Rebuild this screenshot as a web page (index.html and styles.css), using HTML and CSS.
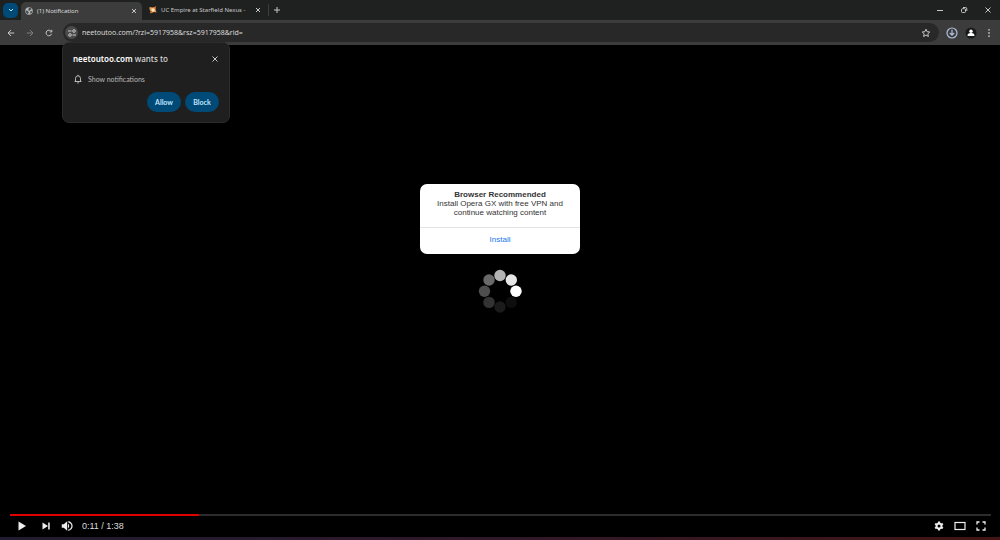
FILE: index.html
```html
<!DOCTYPE html>
<html lang="en">
<head>
<meta charset="utf-8">
<meta name="viewport" content="width=device-width, initial-scale=1">
<title>(1) Notification</title>
<link rel="stylesheet" href="styles.css">
</head>
<body>
<div class="browser">
  <header class="tabstrip">
    <button class="tab-search" aria-label="Search tabs"><svg viewBox="0 0 8 8" width="8" height="8"><path class="line" d="M2 3l2 2 2-2"/></svg></button>
    <div class="tab tab-active">
      <svg class="favicon" viewBox="0 0 16 16"><circle cx="8" cy="8" r="7.5" fill="#b3b5b7"/><path fill="#46494b" d="M1.500 7l4 1 2 3-2 3q-4-2-4-7zM8 1.500l3 0 2.500 3-3 1-1 2-3-1zM10.500 9l4-1-1 4-3 1.500z"/></svg>
      <span class="tab-title">(1) Notification</span>
      <button class="tab-close" aria-label="Close tab"><svg viewBox="0 0 8 8" width="8" height="8"><path class="line" d="M2 2l4 4M6 2l-4 4"/></svg></button>
    </div>
    <div class="tab tab-idle">
      <svg class="favicon" viewBox="0 0 16 16"><path fill="#e59a48" d="M1 2l6 1 7-2-1 6 2 6-5-1-7 3 0-5-2-3z"/><path fill="#f7e3c2" d="M5 5l5 0 2 4-4 3-3-3z"/><path fill="#b6572a" d="M1 14l4-4 1 3zM11 2l4-1-3 5z"/></svg>
      <span class="tab-title">UC Empire at Starfield Nexus -</span>
      <button class="tab-close" aria-label="Close tab"><svg viewBox="0 0 8 8" width="8" height="8"><path class="line" d="M2 2l4 4M6 2l-4 4"/></svg></button>
    </div>
    <button class="new-tab" aria-label="New tab"><svg viewBox="0 0 8 8" width="8" height="8"><path class="line" d="M4 1v6M1 4h6"/></svg></button>
    <div class="window-buttons">
      <button aria-label="Minimize"><svg viewBox="0 0 8 8" width="8" height="8"><path class="line" d="M1 4.5h6"/></svg></button>
      <button aria-label="Restore"><svg viewBox="0 0 8 8" width="8" height="8"><rect class="line" x="1.5" y="2.7" width="4" height="3.8" rx="1"/><path class="line" d="M3 1.5h2.5q1.3 0 1.3 1.3V5"/></svg></button>
      <button aria-label="Close window"><svg viewBox="0 0 8 8" width="8" height="8"><path class="line" d="M1.5 1.5l5 5M6.500 1.500l-5 5"/></svg></button>
    </div>
  </header>

  <div class="toolbar">
    <nav class="nav-buttons" aria-label="Navigation">
      <button aria-label="Back"><svg viewBox="0 0 8 8" width="8" height="8"><path class="line" d="M7.2 4H1M4 1L1 4l3 3"/></svg></button>
      <button class="dim" aria-label="Forward"><svg viewBox="0 0 8 8" width="8" height="8"><path class="line" d="M.8 4H7M4 1l3 3-3 3"/></svg></button>
      <button aria-label="Reload"><svg viewBox="0 0 8 8" width="8" height="8"><path class="line" d="M6.6 4.8A2.8 2.8 0 1 1 6.3 2.5M6.8 .8v2.1H4.7"/></svg></button>
    </nav>
    <div class="omnibox">
      <button class="site-info" aria-label="Site information"><svg viewBox="0 0 10 10" width="10" height="10"><path class="line" d="M1 3h3.500M5.500 7H9"/><circle class="line" cx="7" cy="3" r="1.3"/><circle class="line" cx="3" cy="7" r="1.3"/></svg></button>
      <input class="url" type="text" aria-label="Address" value="neetoutoo.com/?rzi=5917958&amp;rsz=5917958&amp;rid=">
      <button class="star" aria-label="Bookmark"><svg viewBox="0 0 10 10" width="10" height="10"><path class="line" d="M5 1.2l1.1 2.5 2.7.3-2 1.8.6 2.7L5 7.100l-2.400 1.400.6-2.700-2-1.800 2.700-.3z"/></svg></button>
    </div>
    <div class="toolbar-end">
      <button aria-label="Downloads"><svg viewBox="0 0 12 12" width="12" height="12"><g fill="none" stroke="#aebfdd" stroke-width="1.200"><circle cx="6" cy="6" r="5"/><path d="M6 2.800v5.400M3.800 6L6 8.200 8.200 6"/></g></svg></button>
      <button aria-label="Profile"><svg viewBox="0 0 12 12" width="12" height="12"><circle cx="6" cy="6" r="5.500" fill="#17191a"/><circle cx="6" cy="4.200" r="1.700" fill="#fff"/><path fill="#fff" d="M2.600 9V7.800Q2.800 6.400 6 5.700 9.200 6.400 9.400 7.800V9z"/></svg></button>
      <button aria-label="Menu"><svg viewBox="0 0 12 12" width="12" height="12"><g fill="#bdbdbd"><circle cx="5" cy="2.800" r=".9"/><circle cx="5" cy="6" r=".9"/><circle cx="5" cy="9.200" r=".9"/></g></svg></button>
    </div>

    <section class="permission" role="dialog" aria-label="Permission request">
      <div class="permission-head">
        <h2><b>neetoutoo.com</b> wants to</h2>
        <button aria-label="Dismiss"><svg viewBox="0 0 8 8" width="8" height="8"><path class="line" d="M1.500 1.500l5 5M6.500 1.500l-5 5"/></svg></button>
      </div>
      <p class="permission-item"><svg viewBox="0 0 10 10" width="10" height="10"><path class="line" d="M1.500 7.500h7M2.500 7.500V4.300Q2.600 1.900 5 1.800 7.400 1.900 7.500 4.300V7.500M5 .8v1M4.200 8.900h1.600"/></svg>Show notifications</p>
      <div class="permission-actions">
        <button>Allow</button>
        <button>Block</button>
      </div>
    </section>
  </div>

  <main class="player">
    <div class="stage">
      <section class="card">
        <div class="card-text">
          <h1>Browser Recommended</h1>
          <p>Install Opera GX with free VPN and continue watching content</p>
        </div>
        <a class="install" href="#">Install</a>
      </section>
      <svg class="spinner" viewBox="0 0 44 44" width="44" height="44" role="img" aria-label="Loading">
        <circle cx="22" cy="6.500" r="5.700" fill="#b3b3b3"/><circle cx="33.300" cy="11" r="5.700" fill="#e6e6e6"/><circle cx="38" cy="22.300" r="5.700" fill="#fff"/><circle cx="33.300" cy="33.400" r="5.700" fill="#0e0e0e"/><circle cx="22" cy="38" r="5.700" fill="#1b1b1b"/><circle cx="11" cy="33.400" r="5.700" fill="#333"/><circle cx="6.500" cy="22.300" r="5.700" fill="#4e4e4e"/><circle cx="11" cy="11" r="5.700" fill="#696969"/>
      </svg>
    </div>
    <footer class="controls">
      <progress class="track" value="11" max="57" aria-label="Playback position"></progress>
      <div class="control-row">
        <button aria-label="Play"><svg viewBox="0 0 12 12" width="12" height="12"><path fill="#eee" d="M2.500 1.500l7.500 4.500-7.500 4.500z"/></svg></button>
        <button class="next" aria-label="Next"><svg viewBox="0 0 12 12" width="12" height="12"><path fill="#eee" d="M2.500 2.500L8 6 2.500 9.500zM8.200 2.500h1.500v7H8.200z"/></svg></button>
        <button class="volume" aria-label="Mute"><svg viewBox="0 0 12 12" width="12" height="12"><path fill="#eee" d="M.8 4.200h2L6.200 1.200v9.600L2.800 7.800h-2zM7 3.500q2.400 2.500 0 5z"/><path fill="none" stroke="#eee" stroke-width="1.200" d="M7.300 1.600q3.700 1.300 3.700 4.400T7.300 10.400"/></svg></button>
        <span class="time">0:11 / 1:38</span>
        <div class="control-end">
          <button aria-label="Settings"><svg viewBox="0 0 12 12" width="12" height="12"><circle cx="6" cy="6" r="2.500" fill="none" stroke="#eee" stroke-width="2"/><path stroke="#eee" stroke-width="2" d="M6 1.500v1.500M6 9v1.500M2.100 3.750l1.300.75M8.600 7.500l1.300.75M2.100 8.250l1.300-.75M8.600 4.500l1.300-.75"/></svg></button>
          <button aria-label="Theater mode"><svg viewBox="0 0 12 12" width="12" height="12"><rect x="1" y="2.500" width="10" height="7" fill="none" stroke="#eee" stroke-width="1.200"/></svg></button>
          <button aria-label="Full screen"><svg viewBox="0 0 12 12" width="12" height="12"><path fill="none" stroke="#eee" stroke-width="1.300" d="M2 4.500V2h2.500M7.500 2H10v2.500M10 7.500V10H7.500M4.500 10H2V7.500"/></svg></button>
        </div>
      </div>
    </footer>
  </main>
  <div class="desktop-edge"></div>
</div>
</body>
</html>
```

FILE: styles.css
```css
* { box-sizing: border-box; }

body {
  margin: 0;
  background: #000;
  color: #dadada;
  font-family: Lato, "Open Sans", sans-serif;
  font-size: 7px;
  line-height: 10px;
}

button {
  display: flex;
  align-items: center;
  justify-content: center;
  padding: 0;
  border: 0;
  background: none;
  color: #c7c7c7;
  font: inherit;
}

h1, h2, p { margin: 0; }
svg { display: block; flex: none; }
.line { fill: none; stroke: currentColor; stroke-width: 1; }

.browser { display: flex; flex-direction: column; min-height: 100vh; }

.tabstrip {
  display: flex;
  align-items: center;
  height: 20px;
  padding-left: 3px;
  background: #1f2121;
}
.tab-search {
  width: 15px;
  height: 15px;
  margin-right: 3px;
  border-radius: 5px;
  background: #004a77;
  color: #c2e7ff;
}
.tab { display: flex; align-items: center; gap: 4px; height: 16px; padding: 0 4px; }
.tab-active {
  width: 121px;
  height: 18px;
  align-self: flex-end;
  padding-bottom: 1px;
  border-radius: 5px 5px 0 0;
  background: #3c3c3c;
}
.tab-idle {
  width: 126px;
  padding: 0 6px 0 7px;
  color: #c7c7c7;
}
.favicon { width: 8px; height: 8px; }
.tab-title {
  flex: 1;
  min-width: 0;
  font: 6px/10px "Noto Sans", "Open Sans", sans-serif;
  white-space: nowrap;
}
.tab-close { width: 8px; height: 8px; }
.new-tab {
  width: 16px;
  height: 12px;
  border-left: 1px solid #3c3e3e;
}
.window-buttons { display: flex; gap: 16px; margin-left: auto; padding-right: 8px; }

.toolbar {
  position: relative;
  display: flex;
  align-items: center;
  height: 25px;
  padding: 0 4px 0 7px;
  background: #3c3c3c;
}
.nav-buttons { display: flex; gap: 11px; width: 56px; }
.nav-buttons .dim { color: #7e7e7e; }
.omnibox {
  display: flex;
  flex: 1;
  align-items: center;
  gap: 4px;
  height: 19px;
  padding: 0 8px 0 2px;
  border-radius: 10px;
  background: #282828;
}
.site-info { width: 13px; height: 13px; border-radius: 50%; background: #4a4a4a; }
.url {
  flex: 1;
  min-width: 0;
  padding: 0;
  border: 0;
  outline: 0;
  background: none;
  color: #dadada;
  font: 7px/10px "Noto Sans", "Open Sans", sans-serif;
}
.toolbar-end { display: flex; gap: 7px; margin-left: 7px; }

.permission {
  position: absolute;
  z-index: 1;
  top: 22px;
  left: 62px;
  width: 168px;
  padding: 11px 10px 10px;
  border: 1px solid #2b2c2c;
  border-radius: 7px;
  background: #1f1f1f;
}
.permission-head { display: flex; align-items: center; justify-content: space-between; }
.permission-head h2 {
  font: 500 8px/10px "Noto Sans", "Open Sans", sans-serif;
}
.permission-head b { color: #fff; font-weight: 600; }
.permission-item {
  display: flex;
  align-items: center;
  gap: 5px;
  margin-top: 10px;
  color: #b8b8b8;
}
.permission-actions { display: flex; justify-content: flex-end; gap: 4px; margin-top: 8px; }
.permission-actions button {
  width: 34px;
  height: 20px;
  border-radius: 10px;
  background: #004a77;
  color: #c2e7ff;
  font-weight: 700;
}

.player { display: flex; flex: 1; flex-direction: column; background: #000; }
.stage {
  display: flex;
  flex: 1;
  flex-direction: column;
  align-items: center;
  justify-content: center;
  gap: 15px;
  padding-bottom: 63px;
}
.card {
  width: 160px;
  overflow: hidden;
  border-radius: 7px;
  background: #fff;
  color: #333;
  font: 8px/9px "Liberation Sans", Arial, sans-serif;
  text-align: center;
}
.card-text { padding: 6px 10px 10px; border-bottom: 1px solid #e4e4e4; }
.card h1 { font-size: 8px; line-height: 9px; }
.install {
  display: block;
  padding: 7px 0 10px;
  color: #1677f0;
  text-decoration: none;
}

.controls { padding: 0 9px 1px 10px; }
.track {
  display: block;
  width: 100%;
  height: 2px;
  border: 0;
  appearance: none;
  background: #2c2c2c;
}
.track::-webkit-progress-bar { background: #2c2c2c; }
.track::-webkit-progress-value { background: #e00000; }
.control-row { display: flex; align-items: center; height: 20px; padding: 0 4px 0 6px; }
.next { margin-left: 12px; }
.volume { margin-left: 9px; }
.time { margin-left: 9px; color: #ddd; font: 9px/12px "Liberation Sans", Arial, sans-serif; }
.control-end { display: flex; gap: 9px; margin-left: auto; }
.desktop-edge { height: 3px; background: linear-gradient(to right, #211c31, #30182a 50%, #401513); }
```
